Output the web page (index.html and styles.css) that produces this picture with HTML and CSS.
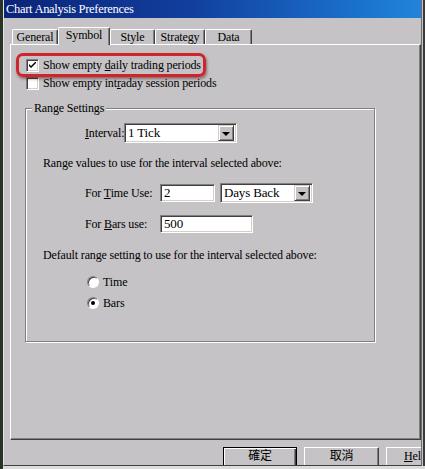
FILE: index.html
```html
<!DOCTYPE html>
<html lang="zh-Hant">
<head>
<meta charset="UTF-8" />
<title>Chart Analysis Preferences</title>
<link rel="stylesheet" href="styles.css">
</head>
<body>

<div class="desk"></div>

<div class="window">
  <div class="titlebar">Chart Analysis Preferences</div>

  <div class="client">
    <div class="tabs">
      <div class="tab t-general">General</div>
      <div class="tab t-symbol active">Symbol</div>
      <div class="tab t-style">Style</div>
      <div class="tab t-strategy">Strategy</div>
      <div class="tab t-data">Data</div>
    </div>

    <div class="panel">
      <div class="mark"></div>

      <div class="check-row">
        <span class="checkbox">
          <svg width="7" height="7" viewBox="0 0 7 7"><path d="M0 2 L0 4 L2 6 L7 1 L7 -1 L2 4 Z" fill="#000"/></svg>
        </span>
        <span>Show empty <u>d</u>aily trading periods</span>
      </div>
      <div class="check-row">
        <span class="checkbox"></span>
        <span>Show empty int<u>r</u>aday session periods</span>
      </div>

      <fieldset class="group">
        <legend>Range Settings</legend>

        <div class="row row-interval">
          <span class="lbl-interval"><u>I</u>nterval:</span>
          <div class="select sel-interval">
            <span class="value">1 Tick</span>
            <span class="arrow"><i></i></span>
          </div>
        </div>

        <div class="note note-range">Range values to use for the interval selected above:</div>

        <div class="row row-time">
          <span class="lbl">For <u>T</u>ime Use:</span>
          <div class="field f-time">2</div>
          <div class="select sel-days">
            <span class="value">Days Back</span>
            <span class="arrow"><i></i></span>
          </div>
        </div>

        <div class="row row-bars">
          <span class="lbl">For <u>B</u>ars use:</span>
          <div class="field f-bars">500</div>
        </div>

        <div class="note note-default">Default range setting to use for the interval selected above:</div>

        <div class="radio-row r-time">
          <span class="radio"></span>
          <span>Time</span>
        </div>
        <div class="radio-row r-bars">
          <span class="radio on"><i></i></span>
          <span>Bars</span>
        </div>
      </fieldset>
    </div>

    <div class="buttons">
      <div class="btn default"><span>確定</span></div>
      <div class="btn"><span>取消</span></div>
      <div class="btn btn-help"><span><u>H</u>elp</span></div>
    </div>
  </div>
</div>

<div class="edge"></div>

</body>
</html>
```

FILE: styles.css
```css
/* base */
* {
  box-sizing: border-box;
}
html, body {
  margin: 0;
  height: 469px;
  overflow: hidden;
}
body {
  display: flex;
  align-items: flex-start;
  background: #dcdcdc;
  font-family: "Liberation Serif", "Times New Roman", serif;
  font-size: 12px;
  letter-spacing: -0.15px;
  color: #000;
}
u {
  text-decoration: underline;
  text-underline-offset: 1px;
}

.desk {
  width: 3px;
  height: 469px;
  flex-shrink: 0;
  background: #263326;
}
.edge {
  width: 3px;
  height: 466px;
  flex-shrink: 0;
  background: linear-gradient(90deg, #c5c3c5 0 1px, #3a3a3a 1px);
}

/* window frame */
.window {
  width: 419px;
  height: 466px;
  flex-shrink: 0;
  background: #c5c3c5;
  border-left: 1px solid #e4e3e4;
  border-right: 1px solid #6e6e6e;
  border-bottom: 1px solid #404040;
  overflow: hidden;
  display: flex;
  flex-direction: column;
}
.titlebar {
  height: 18px;
  line-height: 18px;
  padding-left: 2px;
  color: #fff;
  font-size: 12.5px;
  letter-spacing: -0.3px;
  background: linear-gradient(90deg, #0a2478, #123f9e 45%, #1a72cc 85%, #2184da);
  white-space: nowrap;
}
.client {
  flex: 1;
  padding: 9px 0 0 6px;
  display: flex;
  flex-direction: column;
}

/* tabs */
.tabs {
  display: flex;
  align-items: flex-end;
  height: 17px;
  padding-left: 2px;
}
.tab {
  height: 15px;
  line-height: 14px;
  text-align: center;
  border-top: 1px solid #fff;
  border-left: 1px solid #fff;
  border-right: 1px solid #404040;
  box-shadow: inset -1px 0 0 #808080;
  border-radius: 2px 2px 0 0;
  white-space: nowrap;
}
.t-general { width: 46px; }
.t-symbol { width: 52px; }
.t-style { width: 45px; }
.t-strategy { width: 50px; }
.t-data { width: 47px; }
.tab.active {
  position: relative;
  z-index: 1;
  height: 18px;
  line-height: 15px;
  margin-bottom: -1px;
  background: #c5c3c5;
}

/* panel */
.panel {
  position: relative;
  width: 411px;
  height: 396px;
  border-top: 1px solid #fff;
  border-left: 1px solid #fff;
  border-right: 1px solid #404040;
  border-bottom: 1px solid #404040;
  box-shadow: inset -1px -1px 0 #808080;
  padding: 13px 0 0 14px;
}
.mark {
  position: absolute;
  left: 5px;
  top: 8px;
  width: 190px;
  height: 24px;
  border: 3px solid #d0242c;
  border-radius: 7px;
  box-shadow: 1px 2px 3px rgba(60, 0, 0, 0.45);
}

.check-row {
  display: flex;
  align-items: center;
  height: 14px;
  gap: 4px;
  padding-left: 1px;
  margin-bottom: 4px;
  white-space: nowrap;
}
.checkbox {
  width: 13px;
  height: 13px;
  flex-shrink: 0;
  background: #fff;
  border-top: 1px solid #808080;
  border-left: 1px solid #808080;
  border-right: 1px solid #fff;
  border-bottom: 1px solid #fff;
  box-shadow: inset 1px 1px 0 #404040, inset -1px -1px 0 #d4d0c8;
  display: flex;
  align-items: center;
  justify-content: center;
}

/* group box */
.group {
  width: 350px;
  margin: 11px 0 0 0;
  padding: 0;
  height: 241px;
  border: 1px solid #808080;
  box-shadow: inset 1px 1px 0 #fff, 1px 1px 0 #fff;
  min-width: 0;
}
.group legend {
  margin-left: 6px;
  padding: 0 2px;
  line-height: 14px;
  background: #c5c3c5;
  position: relative;
}

.row {
  display: flex;
  align-items: center;
  height: 20px;
  padding-left: 59px;
  white-space: nowrap;
}
.row-interval { margin-top: 8px; }
.row-time { margin-top: 13px; }
.row-bars { margin-top: 11px; }
.lbl-interval { width: 39px; }
.lbl { width: 75px; }

.note {
  line-height: 14px;
  padding-left: 17px;
  white-space: nowrap;
}
.note-range { margin-top: 13px; }
.note-default { margin-top: 14px; }

.select {
  height: 20px;
  background: #fff;
  border-top: 1px solid #808080;
  border-left: 1px solid #808080;
  border-right: 1px solid #fff;
  border-bottom: 1px solid #fff;
  box-shadow: inset 1px 1px 0 #404040, inset -1px -1px 0 #d4d0c8;
  display: flex;
  align-items: center;
  padding: 2px;
  font-size: 13px;
}
.select .value {
  flex: 1;
  padding-left: 1px;
}
.sel-interval { width: 113px; }
.sel-days { width: 93px; margin-left: 5px; }
.arrow {
  width: 16px;
  height: 16px;
  background: #c5c3c5;
  border-top: 1px solid #d4d0c8;
  border-left: 1px solid #d4d0c8;
  border-right: 1px solid #404040;
  border-bottom: 1px solid #404040;
  box-shadow: inset 1px 1px 0 #fff, inset -1px -1px 0 #808080;
  display: flex;
  align-items: center;
  justify-content: center;
}
.arrow i {
  width: 0;
  height: 0;
  border-left: 4px solid transparent;
  border-right: 4px solid transparent;
  border-top: 4px solid #000;
  margin-top: 1px;
}

.field {
  height: 18px;
  line-height: 14px;
  background: #fff;
  padding: 1px 3px;
  border-top: 1px solid #808080;
  border-left: 1px solid #808080;
  border-right: 1px solid #fff;
  border-bottom: 1px solid #fff;
  box-shadow: inset 1px 1px 0 #404040, inset -1px -1px 0 #d4d0c8;
  font-size: 13px;
}
.f-time { width: 55px; }
.f-bars { width: 93px; }

.radio-row {
  display: flex;
  align-items: center;
  gap: 4px;
  height: 14px;
  padding-left: 61px;
}
.r-time { margin-top: 13px; }
.r-bars { margin-top: 7px; }
.radio {
  width: 12px;
  height: 12px;
  border-radius: 50%;
  background: #fff;
  border: 1px solid;
  border-color: #808080 #fff #fff #808080;
  box-shadow: inset 1px 1px 0 #404040;
  display: flex;
  align-items: center;
  justify-content: center;
}
.radio.on i {
  width: 4px;
  height: 4px;
  border-radius: 50%;
  background: #000;
}

/* dialog buttons */
.buttons {
  display: flex;
  gap: 7px;
  margin-top: 7px;
  padding-left: 213px;
}
.btn {
  flex-shrink: 0;
  width: 75px;
  height: 21px;
  border-top: 1px solid #fff;
  border-left: 1px solid #fff;
  border-right: 1px solid #404040;
  border-bottom: 1px solid #404040;
  box-shadow: inset -1px -1px 0 #808080;
  text-align: center;
  line-height: 17px;
  font-family: "Liberation Serif", "Noto Sans CJK TC", serif;
  font-size: 12px;
}
.btn.default {
  width: 74px;
  border: 1px solid #000;
  box-shadow: inset 1px 1px 0 #fff, inset -1px -1px 0 #404040, inset -2px -2px 0 #808080;
}
.btn-help {
  text-align: left;
  padding-left: 17px;
}
```
